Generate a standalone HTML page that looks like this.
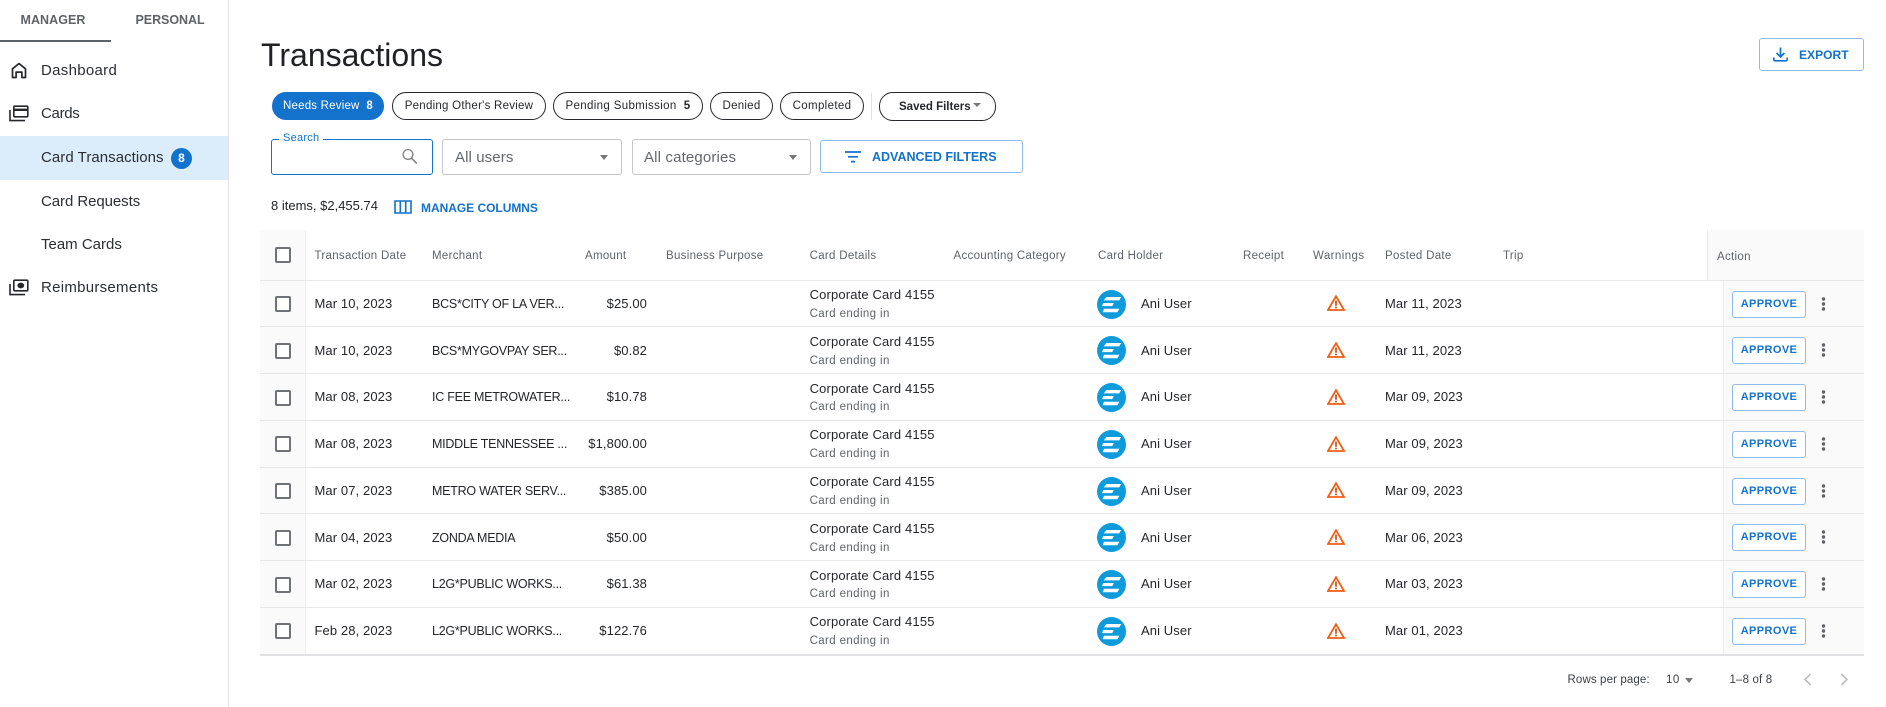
<!DOCTYPE html>
<html><head><meta charset="utf-8"><style>
*{box-sizing:border-box}
html,body{margin:0;padding:0;width:1886px;height:707px;overflow:hidden;background:#fff;font-family:"Liberation Sans",sans-serif;color:#1f2124}
.a{position:absolute}
.t{position:absolute;white-space:nowrap;height:20px;line-height:20px}
.n{font-size:15px;letter-spacing:.3px;left:41px;color:#2b2e33}
.chip{position:absolute;top:92px;height:28px;border:1px solid #26282b;border-radius:14px;font-size:11.5px;line-height:27px;text-align:center;white-space:nowrap;color:#26282b;letter-spacing:.25px}
.sel{position:absolute;top:139px;height:36px;border:1px solid #c4c6c9;border-radius:3px}
.arr{position:absolute;width:0;height:0;border-left:4.5px solid transparent;border-right:4.5px solid transparent;border-top:5px solid #777}
.h{font-size:11.5px;letter-spacing:.3px;color:#5f6368;top:246px}
.r{position:absolute;left:260px;width:1604px;height:46.75px;border-bottom:1px solid #e7e7e7}
.r .l{position:absolute;left:0;top:0;width:46px;height:100%;background:#fafafa;border-right:1px solid #f0f0f0}
.r .e{position:absolute;left:1463px;top:0;width:141px;height:100%;background:#fafafa;border-left:1px solid #eee}
.cb{position:absolute;left:15px;top:15.5px;width:16px;height:16px;border:2px solid #6f7276;border-radius:2px;background:#fff}
.r .t{font-size:13px;letter-spacing:.1px;top:13.4px;color:#24262a}
.d{left:54.5px}.r .m{left:172px;font-size:12.5px;letter-spacing:-.25px}.am{right:1217px}
.r .c1{left:549.6px;top:4.7px;letter-spacing:.15px}
.r .c2{left:549.6px;top:23.3px;font-size:11.5px;color:#5f6368;letter-spacing:.38px}
.r .u{left:881px;letter-spacing:.1px}
.p{left:1125px}
.av{position:absolute;left:837px;top:9px;width:29px;height:29px}
.w{position:absolute;left:1066.5px;top:14.8px;width:18px;height:16px}
.ap{position:absolute;left:1472px;top:10px;width:74px;height:27px;border:1px solid #8fbce8;border-radius:3px;background:#fff;color:#1272cc;font-size:11px;font-weight:bold;text-align:center;line-height:25px;letter-spacing:.4px}
.dt{position:absolute;left:1561px;top:16.2px;width:5px;height:14px}
</style></head><body>
<svg width="0" height="0" style="position:absolute"><defs>
<symbol id="av" viewBox="0 0 29 29"><circle cx="14.5" cy="14.5" r="14.5" fill="#0e9bdc"/><path d="M9.3 7h14.9l-2 3.4H6.8zM6.3 13h10.5l-1.6 3.1H4.9zM7 18.8h15.4l-2 3.4H5.6z" fill="#fff"/></symbol>
<symbol id="wn" viewBox="0 0 18 16"><path d="M9 1.2L17 15H1z" fill="none" stroke="#ef5f14" stroke-width="1.8" stroke-linejoin="miter"/><path d="M8.1 5.5h1.8v5.2H8.1zM8.1 11.6h1.8v1.8H8.1z" fill="#d9531a"/></symbol>
<symbol id="dt" viewBox="0 0 5 14"><circle cx="2.5" cy="2" r="1.7" fill="#5f6368"/><circle cx="2.5" cy="7" r="1.7" fill="#5f6368"/><circle cx="2.5" cy="12" r="1.7" fill="#5f6368"/></symbol>
</defs></svg>

<!-- sidebar -->
<div class="a" style="left:228px;top:0;width:1px;height:707px;background:#e3e3e3"></div>
<div class="t" style="left:20.5px;top:10px;font-size:12.5px;font-weight:bold;color:#5f6368;letter-spacing:.05px">MANAGER</div>
<div class="t" style="left:135.5px;top:10px;font-size:12.5px;font-weight:bold;color:#5f6368;letter-spacing:-.05px">PERSONAL</div>
<div class="a" style="left:0;top:40px;width:111px;height:2px;background:#5f6368"></div>

<svg class="a" style="left:11px;top:62px" width="16" height="17" viewBox="0 0 16 17"><path d="M1.5 15.5V6.8L8 1.6l6.5 5.2v8.7h-3.6v-5.4H5.1v5.4z" fill="none" stroke="#26282b" stroke-width="1.7" stroke-linejoin="round"/></svg>
<div class="t n" style="top:61px">Dashboard</div>
<svg class="a" style="left:9px;top:105px" width="20" height="17" viewBox="0 0 20 17"><rect x="4.8" y="1.2" width="14" height="10.6" rx="1" fill="none" stroke="#26282b" stroke-width="1.6"/><path d="M4.8 4.8h14" stroke="#26282b" stroke-width="2.4"/><path d="M1 5v10.6h15" fill="none" stroke="#26282b" stroke-width="1.6"/></svg>
<div class="t n" style="top:104px;letter-spacing:-.3px">Cards</div>
<div class="a" style="left:0;top:136px;width:228px;height:44px;background:#dbecfb"></div>
<div class="t n" style="top:148px;letter-spacing:.05px">Card Transactions</div>
<div class="a" style="left:171px;top:148px;width:21px;height:21px;border-radius:50%;background:#1272cc;color:#fff;font-size:12px;font-weight:bold;text-align:center;line-height:21px">8</div>
<div class="t n" style="top:192px;letter-spacing:-.07px">Card Requests</div>
<div class="t n" style="top:235px;letter-spacing:0">Team Cards</div>
<svg class="a" style="left:9px;top:279px" width="20" height="17" viewBox="0 0 20 17"><rect x="4.8" y="1.2" width="14" height="10.6" rx="1" fill="none" stroke="#26282b" stroke-width="1.6"/><ellipse cx="11.8" cy="6.5" rx="3.4" ry="2.9" fill="#26282b"/><path d="M1 5v10.6h15" fill="none" stroke="#26282b" stroke-width="1.6"/></svg>
<div class="t n" style="top:278px;letter-spacing:.28px">Reimbursements</div>

<!-- header -->
<div class="t" style="left:261px;top:35px;height:40px;line-height:40px;font-size:32px;color:#1f2124">Transactions</div>
<div class="a" style="left:1759px;top:38px;width:105px;height:33px;border:1px solid #8fbce8;border-radius:3px"></div>
<svg class="a" style="left:1773px;top:47px" width="15" height="15" viewBox="0 0 15 15"><path d="M7.5 0.5v9M3.6 6l3.9 3.9L11.4 6" fill="none" stroke="#1272cc" stroke-width="1.7"/><path d="M0.8 10.5v2a1.3 1.3 0 0 0 1.3 1.3h10.8a1.3 1.3 0 0 0 1.3-1.3v-2" fill="none" stroke="#1272cc" stroke-width="1.7"/></svg>
<div class="t" style="left:1799px;top:45px;font-size:12px;font-weight:bold;color:#1272cc;letter-spacing:.05px">EXPORT</div>

<!-- chips -->
<div class="chip" style="left:272px;width:112px;background:#1272cc;border-color:#1272cc;color:#fff;letter-spacing:.2px">Needs Review&nbsp; <b>8</b></div>
<div class="chip" style="left:392px;width:154px">Pending Other's Review</div>
<div class="chip" style="left:553px;width:150px;letter-spacing:.35px">Pending Submission&nbsp; <b>5</b></div>
<div class="chip" style="left:710px;width:63px">Denied</div>
<div class="chip" style="left:780px;width:84px;letter-spacing:.35px">Completed</div>
<div class="a" style="left:871px;top:93px;width:1px;height:27px;background:#e0e0e0"></div>
<div class="chip" style="left:879px;width:117px;height:29px;font-weight:bold;text-align:left;padding-left:19px;line-height:28px;letter-spacing:0">Saved Filters</div>
<div class="arr" style="left:973px;top:103px;border-left-width:4px;border-right-width:4px;border-top-width:4px"></div>

<!-- filters -->
<div class="a" style="left:271px;top:139px;width:162px;height:36px;border:1px solid #1272cc;border-radius:3px"></div>
<div class="t" style="left:279px;top:128px;padding:0 4px;background:#fff;font-size:11px;color:#1272cc;letter-spacing:.25px">Search</div>
<svg class="a" style="left:401px;top:148px" width="18" height="17" viewBox="0 0 18 17"><circle cx="7" cy="6.5" r="4.9" fill="none" stroke="#808080" stroke-width="1.3"/><path d="M10.6 10.2l5.2 5.4" stroke="#808080" stroke-width="1.6"/></svg>
<div class="sel" style="left:442px;width:180px"></div>
<div class="t" style="left:455px;top:148px;font-size:15px;color:#63666a;letter-spacing:.1px">All users</div>
<div class="arr" style="left:600px;top:155px"></div>
<div class="sel" style="left:632px;width:179px"></div>
<div class="t" style="left:644px;top:148px;font-size:15px;color:#63666a;letter-spacing:.15px">All categories</div>
<div class="arr" style="left:789px;top:155px"></div>
<div class="a" style="left:820px;top:140px;width:203px;height:33px;border:1px solid #8fbce8;border-radius:3px"></div>
<svg class="a" style="left:845px;top:151px" width="16" height="12" viewBox="0 0 16 12"><path d="M0 1h16M3 5.8h10M6 10.6h4" stroke="#1272cc" stroke-width="1.7"/></svg>
<div class="t" style="left:872px;top:147px;font-size:12.5px;font-weight:bold;color:#1272cc;letter-spacing:0">ADVANCED FILTERS</div>

<div class="t" style="left:271px;top:196px;font-size:13px;color:#1f2124;letter-spacing:0">8 items, $2,455.74</div>
<svg class="a" style="left:394px;top:200px" width="18" height="14" viewBox="0 0 18 14"><path d="M1 1h16v12H1zM6.3 1v12M11.7 1v12" fill="none" stroke="#1272cc" stroke-width="1.6"/></svg>
<div class="t" style="left:421px;top:198px;font-size:12px;font-weight:bold;color:#1272cc;letter-spacing:-.03px">MANAGE COLUMNS</div>

<!-- table header -->
<div class="a" style="left:260px;top:230px;width:46px;height:50px;background:#fafafa;border-right:1px solid #f0f0f0"></div>
<div class="a" style="left:1707px;top:230px;width:157px;height:50px;background:#fafafa;border-left:1px solid #e8e8e8"></div>
<div class="a" style="left:260px;top:280px;width:1604px;height:1px;background:#e7e7e7"></div>
<div class="a" style="left:275px;top:247px;width:16px;height:16px;border:2px solid #6f7276;border-radius:2px;background:#fff"></div>
<div class="t h" style="left:314.5px">Transaction Date</div>
<div class="t h" style="left:432px">Merchant</div>
<div class="t h" style="left:585px">Amount</div>
<div class="t h" style="left:666px">Business Purpose</div>
<div class="t h" style="left:809.6px">Card Details</div>
<div class="t h" style="left:953.5px">Accounting Category</div>
<div class="t h" style="left:1098px">Card Holder</div>
<div class="t h" style="left:1243px">Receipt</div>
<div class="t h" style="left:1313px;letter-spacing:.42px">Warnings</div>
<div class="t h" style="left:1385px">Posted Date</div>
<div class="t h" style="left:1503px">Trip</div>
<div class="t h" style="left:1717px;top:247px">Action</div>

<!-- rows -->
<div class="r" style="top:280.5px"><div class="l"></div><div class="e"></div><div class="cb"></div><div class="t d">Mar 10, 2023</div><div class="t m">BCS*CITY OF LA VER...</div><div class="t am">$25.00</div><div class="t c1">Corporate Card 4155</div><div class="t c2">Card ending in</div><svg class="av"><use href="#av"/></svg><div class="t u">Ani User</div><svg class="w"><use href="#wn"/></svg><div class="t p">Mar 11, 2023</div><div class="ap">APPROVE</div><svg class="dt"><use href="#dt"/></svg></div>
<div class="r" style="top:327.25px"><div class="l"></div><div class="e"></div><div class="cb"></div><div class="t d">Mar 10, 2023</div><div class="t m">BCS*MYGOVPAY SER...</div><div class="t am">$0.82</div><div class="t c1">Corporate Card 4155</div><div class="t c2">Card ending in</div><svg class="av"><use href="#av"/></svg><div class="t u">Ani User</div><svg class="w"><use href="#wn"/></svg><div class="t p">Mar 11, 2023</div><div class="ap">APPROVE</div><svg class="dt"><use href="#dt"/></svg></div>
<div class="r" style="top:374px"><div class="l"></div><div class="e"></div><div class="cb"></div><div class="t d">Mar 08, 2023</div><div class="t m">IC FEE METROWATER...</div><div class="t am">$10.78</div><div class="t c1">Corporate Card 4155</div><div class="t c2">Card ending in</div><svg class="av"><use href="#av"/></svg><div class="t u">Ani User</div><svg class="w"><use href="#wn"/></svg><div class="t p">Mar 09, 2023</div><div class="ap">APPROVE</div><svg class="dt"><use href="#dt"/></svg></div>
<div class="r" style="top:420.75px"><div class="l"></div><div class="e"></div><div class="cb"></div><div class="t d">Mar 08, 2023</div><div class="t m">MIDDLE TENNESSEE ...</div><div class="t am">$1,800.00</div><div class="t c1">Corporate Card 4155</div><div class="t c2">Card ending in</div><svg class="av"><use href="#av"/></svg><div class="t u">Ani User</div><svg class="w"><use href="#wn"/></svg><div class="t p">Mar 09, 2023</div><div class="ap">APPROVE</div><svg class="dt"><use href="#dt"/></svg></div>
<div class="r" style="top:467.5px"><div class="l"></div><div class="e"></div><div class="cb"></div><div class="t d">Mar 07, 2023</div><div class="t m">METRO WATER SERV...</div><div class="t am">$385.00</div><div class="t c1">Corporate Card 4155</div><div class="t c2">Card ending in</div><svg class="av"><use href="#av"/></svg><div class="t u">Ani User</div><svg class="w"><use href="#wn"/></svg><div class="t p">Mar 09, 2023</div><div class="ap">APPROVE</div><svg class="dt"><use href="#dt"/></svg></div>
<div class="r" style="top:514.25px"><div class="l"></div><div class="e"></div><div class="cb"></div><div class="t d">Mar 04, 2023</div><div class="t m">ZONDA MEDIA</div><div class="t am">$50.00</div><div class="t c1">Corporate Card 4155</div><div class="t c2">Card ending in</div><svg class="av"><use href="#av"/></svg><div class="t u">Ani User</div><svg class="w"><use href="#wn"/></svg><div class="t p">Mar 06, 2023</div><div class="ap">APPROVE</div><svg class="dt"><use href="#dt"/></svg></div>
<div class="r" style="top:561px"><div class="l"></div><div class="e"></div><div class="cb"></div><div class="t d">Mar 02, 2023</div><div class="t m">L2G*PUBLIC WORKS...</div><div class="t am">$61.38</div><div class="t c1">Corporate Card 4155</div><div class="t c2">Card ending in</div><svg class="av"><use href="#av"/></svg><div class="t u">Ani User</div><svg class="w"><use href="#wn"/></svg><div class="t p">Mar 03, 2023</div><div class="ap">APPROVE</div><svg class="dt"><use href="#dt"/></svg></div>
<div class="r" style="top:607.75px"><div class="l"></div><div class="e"></div><div class="cb"></div><div class="t d">Feb 28, 2023</div><div class="t m">L2G*PUBLIC WORKS...</div><div class="t am">$122.76</div><div class="t c1">Corporate Card 4155</div><div class="t c2">Card ending in</div><svg class="av"><use href="#av"/></svg><div class="t u">Ani User</div><svg class="w"><use href="#wn"/></svg><div class="t p">Mar 01, 2023</div><div class="ap">APPROVE</div><svg class="dt"><use href="#dt"/></svg></div>
<div class="a" style="left:260px;top:654px;width:1604px;height:2px;background:#e2e2e4"></div>

<!-- pagination -->
<div class="t" style="left:1567.5px;top:670px;font-size:11.5px;color:#3c3f43;letter-spacing:.12px">Rows per page:</div>
<div class="t" style="left:1666px;top:669.5px;font-size:11.5px;color:#3c3f43;letter-spacing:.5px">10</div>
<div class="arr" style="left:1685px;top:678px"></div>
<div class="t" style="left:1729.5px;top:670px;font-size:11.5px;color:#3c3f43;letter-spacing:.15px">1–8 of 8</div>
<svg class="a" style="left:1803px;top:673px" width="9" height="13" viewBox="0 0 9 13"><path d="M7.5 1L2 6.5 7.5 12" fill="none" stroke="#bdbdbd" stroke-width="1.6"/></svg>
<svg class="a" style="left:1840px;top:673px" width="9" height="13" viewBox="0 0 9 13"><path d="M1.5 1L7 6.5 1.5 12" fill="none" stroke="#bdbdbd" stroke-width="1.6"/></svg>
</body></html>
